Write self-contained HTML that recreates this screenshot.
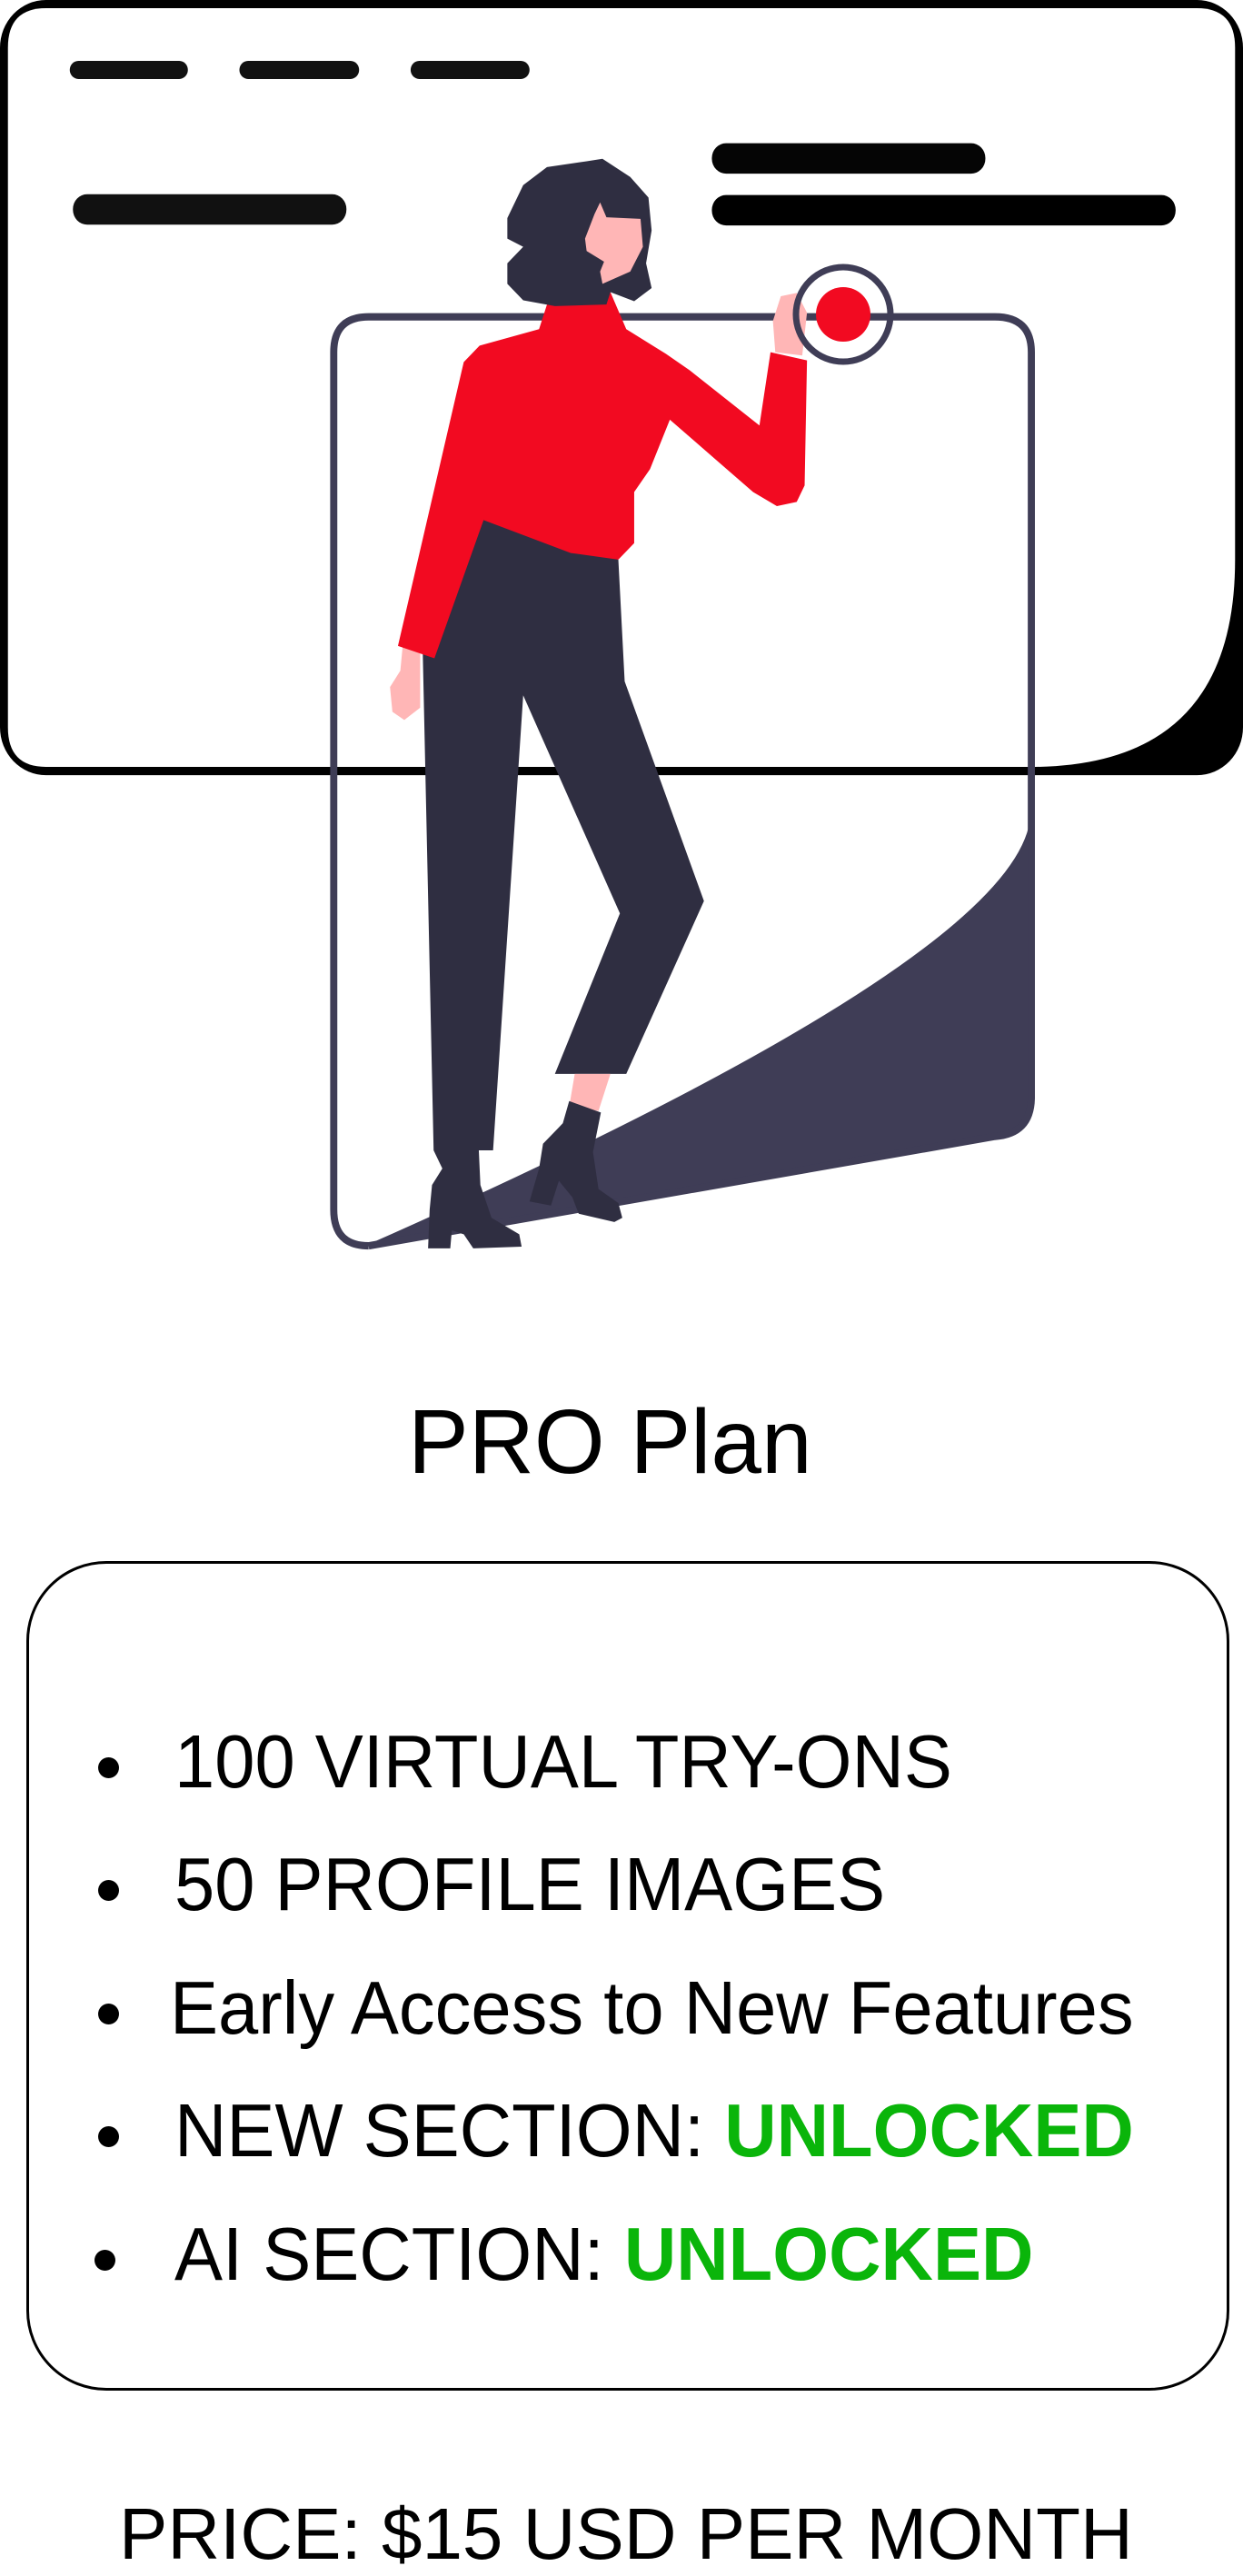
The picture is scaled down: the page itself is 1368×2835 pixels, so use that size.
<!DOCTYPE html>
<html><head><meta charset="utf-8"><style>
html,body{margin:0;padding:0;background:#fff;}
body{width:1368px;height:2835px;position:relative;overflow:hidden;font-family:"Liberation Sans",Arial,sans-serif;color:#000;}
.t{position:absolute;white-space:nowrap;line-height:1;}
.b{font-size:83px;left:192px;transform:scaleX(0.958);transform-origin:0 0;}
.dot{position:absolute;left:108px;width:23px;height:23px;border-radius:50%;background:#000;}
.g{color:#0ab50a;font-weight:bold;}
</style></head><body>
<svg style="position:absolute;left:0;top:0" width="1368" height="1420" viewBox="0 0 1568 1568" preserveAspectRatio="none">
<rect x="0" y="0" width="1568" height="942" rx="58" fill="#000"/>
<path d="M10 58 Q10 10 58 10 L1510 10 Q1558 10 1558 58 L1558 680 Q1558 932 1300 932 L58 932 Q10 932 10 884 Z" fill="#fff"/>
<rect x="88" y="74" width="149" height="22" rx="11" fill="#111"/>
<rect x="302" y="74" width="151" height="22" rx="11" fill="#111"/>
<rect x="518" y="74" width="150" height="22" rx="11" fill="#111"/>
<rect x="92" y="236" width="345" height="37" rx="18" fill="#111"/>
<rect x="898" y="174" width="345" height="37" rx="18" fill="#050505"/>
<rect x="898" y="237" width="585" height="37" rx="18" fill="#000"/>
<path d="M1300 990 Q1290 1160 465 1512 L1255 1380 Q1300 1375 1302 1335 Z" fill="#3f3d56"/>
<path d="M465 1514 Q421 1514 421 1470 L421 428 Q421 385 465 385 L1255 385 Q1301 385 1301 428 L1301 1335 Q1300 1378 1255 1381 L465 1514" fill="none" stroke="#3f3d56" stroke-width="9"/>
<path d="M608 630 L780 680 L788 828 L888 1095 L790 1305 L700 1305 L782 1110 L660 845 L622 1398 L547 1398 L533 780 Z" fill="#2f2e41"/>
<path d="M725 1305 L770 1305 L755 1350 L718 1345 Z" fill="#ffb6b6"/>
<path d="M547 1398 L604 1398 L606 1440 L620 1480 L655 1500 L658 1515 L597 1517 L585 1500 L570 1495 L568 1517 L540 1517 L542 1470 L545 1440 L558 1420 Z" fill="#2f2e41"/>
<path d="M718 1338 L758 1352 L748 1400 L755 1445 L780 1462 L785 1480 L775 1485 L730 1475 L722 1455 L705 1435 L695 1465 L668 1460 L680 1420 L685 1390 L705 1370 L710 1365 Z" fill="#2f2e41"/>
<path d="M508 785 L530 790 L530 860 L510 875 L495 865 L492 835 L505 815 Z" fill="#ffb6b6"/>
<path d="M975 390 L985 360 L1005 356 L1018 380 L1012 432 L978 428 Z" fill="#ffb6b6"/>
<path d="M690 370 L770 355 L790 400 L840 430 L870 450 L958 517 L972 428 L1018 438 L1015 590 L1005 610 L980 615 L950 598 L845 510 L820 570 L800 598 L800 660 L780 680 L720 672 L610 632 L548 800 L502 785 L585 440 L605 420 L680 400 Z" fill="#f20a21"/>
<path d="M760 193 L795 215 L818 240 L822 280 L815 320 L822 350 L800 366 L770 355 L765 370 L700 372 L660 365 L640 345 L640 320 L660 300 L640 290 L640 265 L660 225 L690 203 L740 196 Z" fill="#2f2e41"/>
<path d="M757 246 L765 264 L808 266 L811 300 L795 330 L760 345 L757 330 L762 318 L740 305 L738 290 L750 260 Z" fill="#ffb6b6"/>
</svg>
<svg style="position:absolute;left:0;top:0" width="1368" height="1420">
<circle cx="928" cy="346" r="52" fill="none" stroke="#3f3d56" stroke-width="7"/>
<circle cx="928" cy="346" r="30" fill="#f20a21"/>
</svg>
<div class="t" style="left:449px;top:1537px;font-size:100px;">PRO Plan</div>
<div style="position:absolute;left:29px;top:1718px;width:1318px;height:907px;border:3px solid #000;border-radius:88px;"></div>
<div class="dot" style="top:1934px"></div>
<div class="t b" style="top:1897px">100 VIRTUAL TRY-ONS</div>
<div class="dot" style="top:2069px"></div>
<div class="t b" style="top:2032px">50 PROFILE IMAGES</div>
<div class="dot" style="top:2205px"></div>
<div class="t b" style="top:2168px;left:187px">Early Access to New Features</div>
<div class="dot" style="top:2340px"></div>
<div class="t b" style="top:2303px">NEW SECTION: <span class="g">UNLOCKED</span></div>
<div class="dot" style="top:2476px;left:104px"></div>
<div class="t b" style="top:2439px">AI SECTION: <span class="g">UNLOCKED</span></div>
<div class="t" style="left:131px;top:2749px;font-size:80px;">PRICE: $15 USD PER MONTH</div>
</body></html>
